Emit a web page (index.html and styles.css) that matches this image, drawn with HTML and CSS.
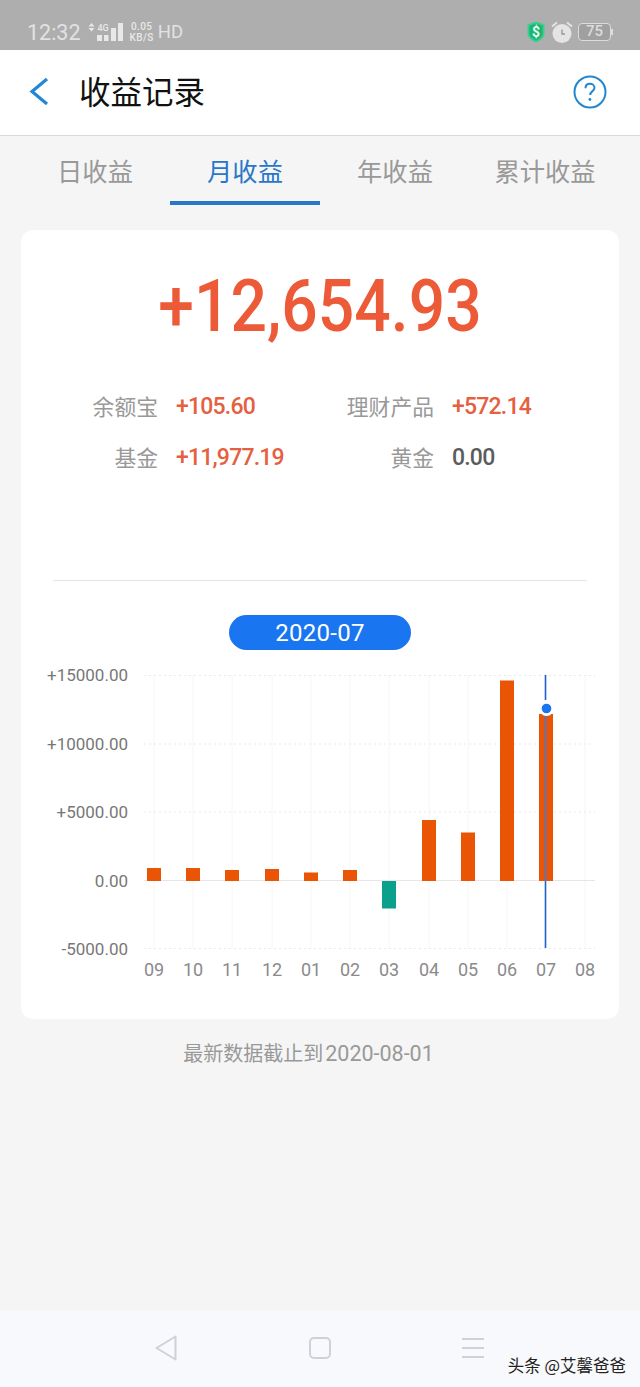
FILE: index.html
```html
<!DOCTYPE html>
<html lang="zh-CN">
<head>
<meta charset="utf-8">
<title>收益记录</title>
<link rel="stylesheet" href="styles.css">
</head>
<body>
<div class="phone">
  <div class="status-bar">
    <div class="status-left">
      <span class="clock">12:32</span>
      <svg class="signal" width="36" height="22" viewBox="0 0 36 22">
        <path class="si-fill" d="M0.500 5.500L3.500 2l3 3.500zM0.500 7h6l-3 3.500z"/>
        <text class="si-4g" x="9.500" y="9.500">4G</text>
        <rect class="si-fill" x="9" y="14" width="5" height="6"/>
        <rect class="si-fill" x="16" y="14" width="4.500" height="6"/>
        <rect class="si-fill" x="23" y="7" width="5" height="13"/>
        <rect class="si-fill" x="30" y="2" width="5" height="18"/>
      </svg>
      <span class="speed"><span>0.05</span><span>KB/S</span></span>
      <span class="hd">HD</span>
    </div>
    <div class="status-right">
      <svg width="20" height="24" viewBox="0 0 20 24">
        <path d="M10 1.500l8.500 3v9c0 4-4 7-8.500 9-4.500-2-8.500-5-8.500-9v-9z" fill="#35d08c"/>
        <path d="M10 3.500l6.500 2.300v7.700c0 3-3 5.300-6.500 7-3.500-1.700-6.500-4-6.500-7V5.800z" fill="#1eb374"/>
        <text class="shield-mark" x="10" y="17">$</text>
      </svg>
      <svg width="24" height="24" viewBox="0 0 24 24">
        <circle cx="12" cy="13.500" r="9.500" fill="#e4e4e4"/>
        <path d="M2 6.500L7 2.500M22 6.500L17 2.500" stroke="#e4e4e4" stroke-width="2" fill="none"/>
        <path d="M12 9.500v4.500h3" stroke="#9a9a9a" stroke-width="1.400" fill="none"/>
      </svg>
      <div class="battery"><span class="battery-body">75</span><span class="battery-tip"></span></div>
    </div>
  </div>

  <header class="top-bar">
    <svg class="back" width="20" height="30" viewBox="0 0 20 30">
      <path d="M18 2L3 14.500 18 27" fill="none" stroke="#2386d8" stroke-width="3.200"/>
    </svg>
    <h1 class="title">收益记录</h1>
    <svg class="help" width="34" height="34" viewBox="0 0 34 34">
      <circle cx="17" cy="17" r="15.500" fill="none" stroke="#2386d0" stroke-width="2"/>
      <path d="M12.500 13.200c0-2.800 2-4.400 4.500-4.400s4.500 1.600 4.500 4c0 3.300-4.300 3.400-4.300 7.200" fill="none" stroke="#2386d0" stroke-width="2"/>
      <circle cx="16.900" cy="24.500" r="1.400" fill="#2386d0"/>
    </svg>
  </header>

  <nav class="tabs">
    <a class="tab">日收益</a>
    <a class="tab tab-active">月收益</a>
    <a class="tab">年收益</a>
    <a class="tab">累计收益</a>
  </nav>

  <main class="content">
    <section class="card">
      <div class="total">+12,654.93</div>
      <dl class="stats">
        <dt>余额宝</dt><dd class="up">+105.60</dd>
        <dt>理财产品</dt><dd class="up">+572.14</dd>
        <dt>基金</dt><dd class="up">+11,977.19</dd>
        <dt>黄金</dt><dd>0.00</dd>
      </dl>
      <div class="divider"></div>
      <div class="month-pill">2020-07</div>
      <svg class="chart" width="598" height="340" viewBox="21 665 598 340">
        <g class="grid-v">
          <path d="M154 675V948M193 675V948M232 675V948M272 675V948M311 675V948M350 675V948M389 675V948M429 675V948M468 675V948M507 675V948M585 675V948"/>
        </g>
        <g class="grid-h">
          <path d="M144 675.500H595M144 744H595M144 812H595M144 948.500H595"/>
        </g>
        <path class="axis" d="M144 880.500H595"/>
        <g class="y-labels">
          <text x="128" y="681">+15000.00</text>
          <text x="128" y="749.500">+10000.00</text>
          <text x="128" y="818">+5000.00</text>
          <text x="128" y="886.500">0.00</text>
          <text x="128" y="954.500">-5000.00</text>
        </g>
        <g class="bars-up">
          <rect x="147" y="868" width="14" height="13"/>
          <rect x="186" y="868" width="14" height="13"/>
          <rect x="225" y="870" width="14" height="11"/>
          <rect x="265" y="869" width="14" height="12"/>
          <rect x="304" y="872.500" width="14" height="8.500"/>
          <rect x="343" y="870" width="14" height="11"/>
          <rect x="422" y="820" width="14" height="61"/>
          <rect x="461" y="832.500" width="14" height="48.500"/>
          <rect x="500" y="680.500" width="14" height="200.500"/>
          <rect x="539" y="714" width="14" height="167"/>
        </g>
        <rect class="bar-down" x="382" y="881" width="14" height="27.500"/>
        <path class="cursor-over" d="M545.500 714V881"/>
        <path class="cursor" d="M545.500 675V700M545.500 881V948"/>
        <circle class="dot-halo" cx="546.500" cy="708.500" r="7.500"/>
        <circle class="dot" cx="546.500" cy="708.500" r="4.800"/>
        <g class="x-labels">
          <text x="154" y="976">09</text>
          <text x="193" y="976">10</text>
          <text x="232" y="976">11</text>
          <text x="272" y="976">12</text>
          <text x="311" y="976">01</text>
          <text x="350" y="976">02</text>
          <text x="389" y="976">03</text>
          <text x="429" y="976">04</text>
          <text x="468" y="976">05</text>
          <text x="507" y="976">06</text>
          <text x="546" y="976">07</text>
          <text x="585" y="976">08</text>
        </g>
      </svg>
    </section>
    <p class="note">最新数据截止到<span class="note-date">2020-08-01</span></p>
  </main>

  <footer class="nav-bar">
    <svg width="24" height="28" viewBox="0 0 24 28">
      <path d="M21.500 2.500v23L2.500 14z" fill="none" stroke="#ced1d6" stroke-width="2" stroke-linejoin="round"/>
    </svg>
    <svg width="22" height="22" viewBox="0 0 22 22">
      <rect x="1" y="1" width="20" height="20" rx="4" fill="none" stroke="#ced1d6" stroke-width="2"/>
    </svg>
    <svg width="24" height="22" viewBox="0 0 24 22">
      <path d="M1 2h22M1 11h22M1 20h22" stroke="#ced1d6" stroke-width="1.800"/>
    </svg>
    <span class="watermark">头条 @艾馨爸爸</span>
  </footer>
</div>
</body>
</html>
```

FILE: styles.css
```css
* { box-sizing: border-box; }

html, body {
  margin: 0;
  padding: 0;
}

body {
  font-family: Roboto, "Noto Sans CJK SC", sans-serif;
  background: #f5f5f5;
}

.phone {
  position: relative;
  width: 640px;
  height: 1387px;
  display: flex;
  flex-direction: column;
  overflow: hidden;
}

/* status bar */
.status-bar {
  height: 50px;
  flex: none;
  background: #aeaeae;
  display: flex;
  justify-content: space-between;
  align-items: center;
  padding: 14px 27px 0 27px;
  color: #e2e2e2;
}

.status-left,
.status-right {
  display: flex;
  align-items: center;
}

.clock {
  font-size: 21.500px;
}

.signal {
  margin-left: 7px;
}

.si-fill { fill: #e8e8e8; }

.si-4g {
  font-size: 9px;
  font-weight: 500;
  fill: #e8e8e8;
}

.speed {
  display: flex;
  flex-direction: column;
  margin-left: 6px;
  font-size: 10px;
  line-height: 11.500px;
  letter-spacing: 0.4px;
  font-weight: 500;
  text-align: center;
  color: #e8e8e8;
}

.hd {
  margin-left: 4px;
  font-size: 18.500px;
}

.status-right { gap: 4px; }

.shield-mark {
  font-size: 14px;
  font-weight: 700;
  text-anchor: middle;
  fill: #e6fff3;
}

.battery {
  display: flex;
  align-items: center;
}

.battery-body {
  width: 33px;
  height: 18px;
  border: 1.500px solid #dcdcdc;
  border-radius: 4px;
  font-size: 15px;
  font-weight: 500;
  line-height: 15px;
  text-align: center;
  color: #dcdcdc;
  background: #a0a0a0;
}

.battery-tip {
  width: 2px;
  height: 6px;
  background: #dcdcdc;
}

/* title row */
.top-bar {
  height: 86px;
  flex: none;
  background: #fff;
  border-bottom: 1px solid #d9d9d9;
  display: flex;
  align-items: center;
  padding: 0 33px 2px 29px;
}

.title {
  margin: 0 0 4px 30px;
  font-family: "Noto Sans CJK SC", sans-serif;
  font-size: 31.500px;
  font-weight: 400;
  color: #111;
  flex: 1;
}

/* period tabs */
.tabs {
  height: 69px;
  flex: none;
  display: grid;
  grid-template-columns: repeat(4, 150px);
  padding: 0 20px;
}

.tab {
  display: flex;
  align-items: center;
  justify-content: center;
  padding-bottom: 1px;
  font-family: "Noto Sans CJK SC", sans-serif;
  font-size: 25.300px;
  color: #999;
}

.tab-active {
  color: #2a76c9;
  border-bottom: 4px solid #2a76c9;
  padding-bottom: 0;
  padding-top: 2px;
}

/* main content */
.content {
  flex: 1;
  padding: 25px 21px 0;
}

.card {
  height: 789px;
  background: #fff;
  border-radius: 12px;
  padding-top: 41px;
}

.total {
  font-size: 72px;
  line-height: 72px;
  font-weight: 500;
  text-align: center;
  color: #ec5a38;
  transform: scaleX(0.892);
}

.stats {
  margin: 38px 0 0;
  display: grid;
  grid-template-columns: 137px 120px 120px 1fr;
  grid-auto-rows: 51px;
  column-gap: 18px;
  align-items: center;
}

.stats dt {
  padding-bottom: 2px;
  font-family: "Noto Sans CJK SC", sans-serif;
  font-size: 21.800px;
  text-align: right;
  color: #999;
}

.stats dd {
  margin: 0;
  font-size: 23px;
  font-weight: 500;
  letter-spacing: -0.8px;
  color: #5c5c5c;
}

.stats dd.up {
  color: #e4603f;
}

.divider {
  height: 1px;
  margin: 97px 32px 0;
  background: #e4e4e4;
}

.month-pill {
  width: 182px;
  height: 35px;
  margin: 34px auto 0;
  border-radius: 18px;
  background: #1a75f0;
  color: #fff;
  font-size: 24px;
  line-height: 36px;
  letter-spacing: 0.3px;
  text-align: center;
}

/* monthly bar chart */
.chart {
  display: block;
  margin-top: 15px;
}

.grid-v path {
  stroke: #f6f6f6;
  stroke-width: 1;
  fill: none;
}

.grid-h path {
  stroke: #e9e9e9;
  stroke-width: 1;
  stroke-dasharray: 2 3;
  fill: none;
}

.axis {
  stroke: #e6e6e6;
  stroke-width: 1;
  fill: none;
}

.y-labels text {
  font-size: 17px;
  text-anchor: end;
  fill: #777;
}

.x-labels text {
  font-size: 18px;
  text-anchor: middle;
  fill: #8a8a8a;
}

.bars-up rect { fill: #e95504; }
.bar-down { fill: #0aa08c; }

.cursor {
  stroke: #1c62c8;
  stroke-width: 1.600;
  fill: none;
}

.cursor-over {
  stroke: #7d6d90;
  stroke-width: 2.500;
  fill: none;
}

.dot-halo { fill: #fff; }
.dot { fill: #1a75f0; }

.note {
  margin: 19px 23px 0 0;
  text-align: center;
  font-size: 20px;
  color: #999;
}

.note-date {
  font-size: 21.500px;
  margin-left: 2px;
}

/* system navigation */
.nav-bar {
  height: 77px;
  flex: none;
  background: #f8f9fd;
  display: flex;
  justify-content: space-between;
  align-items: center;
  padding: 0 155px 2px 154px;
}

.watermark {
  position: absolute;
  right: 14px;
  bottom: 10px;
  font-family: "Noto Sans CJK SC", sans-serif;
  font-size: 16.500px;
  color: #222;
  text-shadow: 1px 1px 0 #fff, -1px 0 0 #eee;
}
```
